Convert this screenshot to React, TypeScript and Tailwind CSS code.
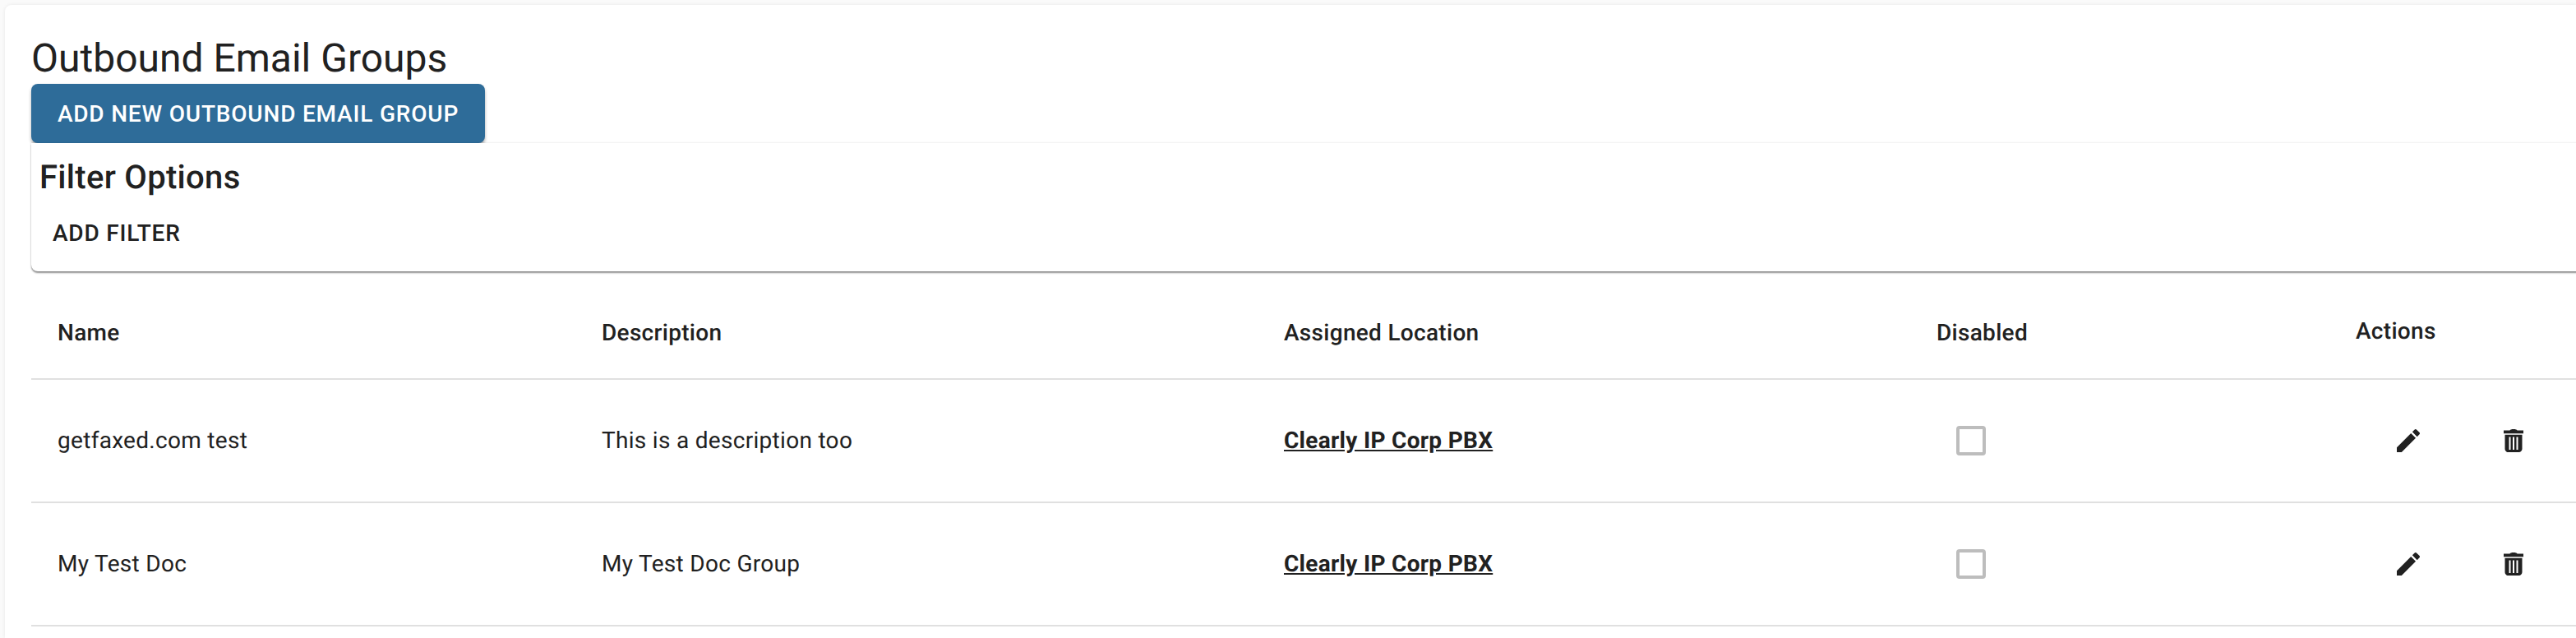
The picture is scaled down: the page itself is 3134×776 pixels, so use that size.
function PencilIcon() {
  return (
    <svg viewBox="3 3 18 18" className="w-[28px] h-[28px] fill-[#212121]">
      <path d="M3 17.25V21h3.75L17.81 9.94l-3.75-3.75L3 17.25zM20.71 7.04c.39-.39.39-1.02 0-1.41l-2.34-2.34c-.39-.39-1.02-.39-1.41 0l-1.83 1.83 3.75 3.75 1.83-1.83z" />
    </svg>
  );
}

function TrashIcon() {
  return (
    <svg viewBox="0 0 24 28" className="w-[24px] h-[28px] fill-[#212121]">
      <path d="M0 1.5h7.5C8 .5 9.5 0 12 0s4 .5 4.5 1.5H24v3.8H0z" />
      <path
        fillRule="evenodd"
        d="M1.5 6.7h21V24c0 2.2-1.8 4-4 4h-13c-2.2 0-4-1.8-4-4zM6.5 9.5V25h2V9.5zM11 9.5V25h2V9.5zM15.5 9.5V25h2V9.5z"
      />
    </svg>
  );
}

const rows = [
  { name: "getfaxed.com test", description: "This is a description too", location: "Clearly IP Corp PBX" },
  { name: "My Test Doc", description: "My Test Doc Group", location: "Clearly IP Corp PBX" },
];

export default function App() {
  return (
    <div className="h-[776px] w-[3134px] overflow-hidden bg-[#fafafa] pt-[6px] pl-[6px] font-['Roboto',sans-serif] text-[#212121] [text-rendering:geometricPrecision]">
      <div className="h-[770px] rounded-tl-[8px] bg-white pl-[32px] shadow-[0_0_4px_rgba(0,0,0,0.08)]">
        <h1 className="pt-[34px] text-[48px] leading-[62px] font-normal">Outbound Email Groups</h1>
        <button className="block h-[72px] w-[552px] rounded-[8px] bg-[#2e6c99] pt-[2px] text-center text-[28px] font-medium tracking-[0.8px] text-white uppercase shadow-[0_4px_4px_-1px_rgba(0,0,0,0.3),0_2px_4px_rgba(0,0,0,0.14)]">
          Add New Outbound Email Group
        </button>
        <div className="mr-[-40px] h-[156px] rounded-b-[8px] bg-white pl-[10px] shadow-[0_2px_2px_rgba(0,0,0,0.45),0_-1px_2px_rgba(0,0,0,0.06)]">
          <h2 className="flex h-[62px] items-center pt-[22px] text-[40px] leading-[20px] font-medium tracking-[0.3px]">Filter Options</h2>
          <button className="mt-[30px] ml-[16px] block text-[28px] leading-[36px] font-medium tracking-[0.8px] uppercase">
            Add Filter
          </button>
        </div>
        <div className="flex h-[132px] items-center border-b-2 border-[#e0e0e0] pt-[20px] text-[28px] font-medium tracking-[0.3px]">
          <div className="w-[662px] pl-[32px]">Name</div>
          <div className="w-[830px] pl-[32px]">Description</div>
          <div className="w-[794px] pl-[32px]">Assigned Location</div>
          <div className="w-[510px] pl-[32px]">Disabled</div>
          <div className="pl-[32px] -translate-y-[2px]">Actions</div>
        </div>
        {rows.map((r) => (
          <div key={r.name} className="flex h-[150px] items-center border-b-2 border-[#e0e0e0] text-[28px] tracking-[0.3px]">
            <div className="w-[662px] pl-[32px]">{r.name}</div>
            <div className="w-[830px] pl-[32px]">{r.description}</div>
            <div className="w-[796px] pl-[32px]">
              <a href="#" className="font-bold tracking-[0.3px] underline">{r.location}</a>
            </div>
            <div className="w-[510px] pl-[54px]">
              <div className="h-[36px] w-[36px] rounded-[4px] border-4 border-[#bdbdbd]" />
            </div>
            <div className="flex items-center gap-[102px] pl-[80px]">
              <PencilIcon />
              <TrashIcon />
            </div>
          </div>
        ))}
      </div>
    </div>
  );
}
